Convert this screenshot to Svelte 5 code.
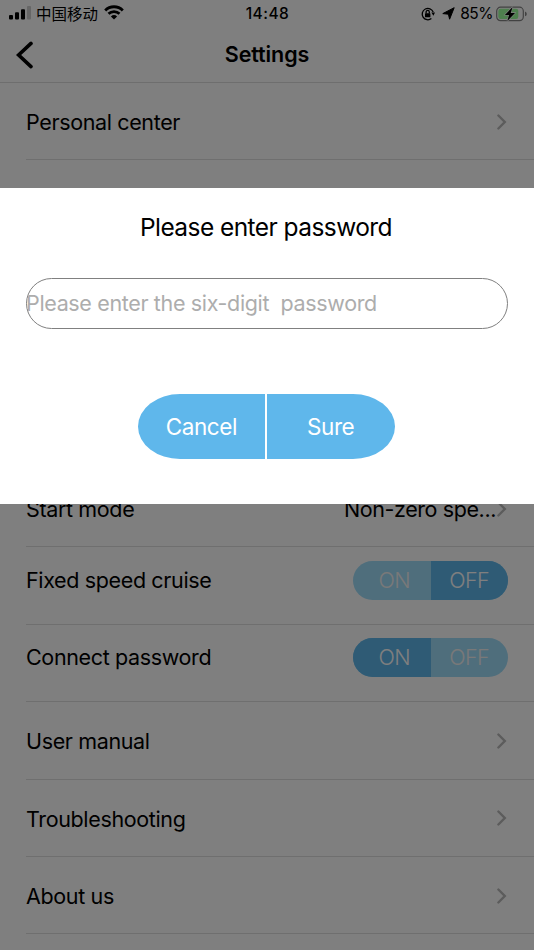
<script lang="ts">
	type Row = {
		label: string;
		value?: string;
		toggle?: 'on' | 'off';
	};

	const topRows: Row[] = [{ label: 'Personal center' }];

	const rows: Row[] = [
		{ label: 'Start mode', value: 'Non-zero spe...' },
		{ label: 'Fixed speed cruise', toggle: 'off' },
		{ label: 'Connect password', toggle: 'on' },
		{ label: 'User manual' },
		{ label: 'Troubleshooting' },
		{ label: 'About us' }
	];

	let password = $state('');
</script>

{#snippet settingRow(row: Row)}
	<li class="row" class:has-toggle={row.toggle}>
		<span class="label">{row.label}</span>
		{#if row.toggle}
			<div class="toggle">
				<span class:active={row.toggle === 'on'}>ON</span>
				<span class:active={row.toggle === 'off'}>OFF</span>
			</div>
		{:else}
			{#if row.value}
				<span class="value">{row.value}</span>
			{/if}
			<svg class="chevron" viewBox="0 0 11 18" width="11" height="18">
				<path d="M1.4 2.5 L7.8 9 L1.4 15.5" />
			</svg>
		{/if}
	</li>
{/snippet}

<main class="screen">
	<header class="status">
		<div class="carrier">
			<svg class="signal" viewBox="0 0 22 14" width="22" height="14">
				<rect x="0" y="9" width="4" height="4.6" rx="1" />
				<rect x="6" y="6.3" width="4" height="7.3" rx="1" />
				<rect x="12" y="3.2" width="4" height="10.4" rx="1" />
				<rect class="faint" x="18" y="0" width="4" height="13.6" rx="1" />
			</svg>
			<span class="network">中国移动</span>
			<svg class="wifi" viewBox="0 0 20 15" width="20" height="15">
				<path d="M1.2 5.4 C6 .5 14 .5 18.8 5.4" />
				<path d="M4.5 8.8 C7.6 5.8 12.4 5.8 15.5 8.8" />
				<path class="dot" d="M6.9 11.4 Q10 8.8 13.1 11.4 L10 14.6 Z" />
			</svg>
		</div>
		<span class="time">14:48</span>
		<div class="power">
			<svg class="lock" viewBox="0 0 14 14" width="14" height="14">
				<path d="M10.4 11.6 A5.7 5.7 0 1 1 12.2 5" />
				<path class="solid" d="M10.4 5.6 H14 L12.4 8.7 Z" />
				<rect class="solid" x="4" y="6.2" width="5.4" height="4" rx=".5" />
				<path d="M5.1 6.4 V5 A1.6 1.6 0 0 1 8.3 5 V6.4" />
			</svg>
			<svg class="arrow" viewBox="0 0 13 13" width="13" height="13">
				<path d="M12.2 .7 L7.6 12.2 L6.4 7.2 L.8 6.6 Z" />
			</svg>
			<span class="percent">85%</span>
			<svg class="battery" viewBox="0 0 31 16" width="31" height="16">
				<rect class="shell" x=".7" y="1.2" width="26.6" height="13.4" rx="3.8" />
				<rect class="charge" x="2.3" y="2.8" width="20" height="10.2" rx="2.2" />
				<path class="tip" d="M29 5.6 Q30.8 6.2 30.8 7.9 Q30.8 9.6 29 10.2 Z" />
				<path class="bolt" d="M16.6 .9 L8.9 9 H13.1 L11.3 15 L19 6.9 H14.7 Z" />
			</svg>
		</div>
	</header>

	<nav class="navbar">
		<svg class="back" viewBox="0 0 18 28" width="18" height="28">
			<path d="M15 2.4 L2.6 14 L15 25.6" />
		</svg>
		<h1>Settings</h1>
	</nav>

	<ul class="list">
		{#each topRows as row}
			{@render settingRow(row)}
		{/each}
	</ul>
	<ul class="list lower">
		{#each rows as row}
			{@render settingRow(row)}
		{/each}
	</ul>
</main>

<div class="backdrop">
	<div class="dialog" role="dialog" aria-labelledby="dialog-title">
		<h2 id="dialog-title">Please enter password</h2>
		<input type="text" placeholder="Please enter the six-digit  password" bind:value={password} />
		<div class="actions">
			<button>Cancel</button>
			<button>Sure</button>
		</div>
	</div>
</div>

<style>
	:global(body) {
		background: #fff;
		overflow: hidden;
	}

	.screen,
	.backdrop {
		width: 534px;
		height: 950px;
		overflow: hidden;
		box-sizing: border-box;
		font-family: Inter, 'Noto Sans CJK SC', sans-serif;
		color: #000;
	}

	svg {
		display: block;
		flex: none;
	}

	.status {
		display: grid;
		grid-template-columns: 1fr auto 1fr;
		align-items: center;
		height: 27px;
		padding: 0 7px 0 9px;
	}

	.carrier,
	.power {
		display: flex;
		align-items: center;
	}

	.power {
		justify-content: flex-end;
	}

	.signal {
		margin-top: -1px;
	}

	.faint {
		opacity: 0.2;
	}

	.network {
		margin: 0 6px 0 5px;
		font-family: 'Noto Sans CJK SC', sans-serif;
		font-size: 15.5px;
		line-height: 27px;
	}

	.wifi {
		margin-top: -2px;
	}

	.wifi path {
		fill: none;
		stroke: #000;
		stroke-width: 2.8;
	}

	.wifi .dot {
		fill: #000;
		stroke: none;
	}

	.time {
		margin-right: 1px;
		font-size: 15.5px;
		font-weight: 500;
		letter-spacing: 0.5px;
	}

	.lock {
		margin-right: 7px;
	}

	.lock path {
		fill: none;
		stroke: #000;
		stroke-width: 1.3;
	}

	.lock .solid {
		fill: #000;
		stroke: none;
	}

	.arrow {
		margin-right: 5px;
	}

	.arrow path {
		stroke: #000;
		stroke-width: 1;
		stroke-linejoin: round;
	}

	.percent {
		margin-right: 3px;
		font-size: 15.5px;
		letter-spacing: -0.5px;
	}

	.shell {
		fill: none;
		stroke: #848484;
		stroke-width: 1.2;
	}

	.charge {
		fill: #9cff9c;
	}

	.tip {
		fill: #848484;
	}

	.bolt {
		stroke: #fff;
		stroke-width: 1.2;
		paint-order: stroke;
	}

	.navbar {
		display: grid;
		grid-template-columns: 18px 1fr 18px;
		align-items: center;
		height: 55px;
		padding: 0 16px;
		border-bottom: 1px solid #dcdcdc;
	}

	.back path {
		fill: none;
		stroke: #000;
		stroke-width: 3.6;
		stroke-linecap: round;
	}

	h1 {
		margin: 0 0 2px;
		font-size: 21.5px;
		font-weight: 600;
		letter-spacing: -0.1px;
		text-align: center;
	}

	.list {
		margin: 0;
		padding: 0 0 0 26px;
		list-style: none;
	}

	/* leaves room for the rows covered by the dialog */
	.lower {
		margin-top: 309.6px;
	}

	.row {
		display: flex;
		align-items: center;
		box-sizing: border-box;
		height: 77.4px;
		padding-top: 2px;
		padding-right: 26px;
		border-bottom: 1px solid #dedede;
		font-size: 21.5px;
		letter-spacing: -0.36px;
	}

	.has-toggle {
		padding-bottom: 13px;
	}

	.label {
		flex: 1;
	}

	.chevron {
		margin-top: -1px;
	}

	.value {
		margin-right: 1px;
		letter-spacing: -0.4px;
	}

	.chevron path {
		fill: none;
		stroke: #b8b8b8;
		stroke-width: 2.4;
		stroke-linecap: round;
	}

	.toggle {
		display: flex;
		width: 155px;
		height: 39px;
		border-radius: 20px;
		overflow: hidden;
		background: #9fdcf8;
	}

	.toggle span {
		width: 50%;
		box-sizing: border-box;
		line-height: 39px;
		text-align: center;
		font-weight: 300;
		letter-spacing: -0.6px;
		color: #f2f2f2;
	}

	.toggle span:first-child {
		padding-left: 5px;
	}

	.toggle .active {
		background: #5eb6ea;
		color: #fff;
	}

	.backdrop {
		position: absolute;
		inset: 0;
		padding-top: 188px;
		background: rgba(0, 0, 0, 0.5);
	}

	.dialog {
		display: flex;
		flex-direction: column;
		align-items: center;
		box-sizing: border-box;
		height: 316px;
		padding: 24px 26px 0;
		background: #fff;
	}

	h2 {
		margin: 0 2px 0 0;
		font-size: 24.5px;
		font-weight: 400;
		letter-spacing: -0.56px;
		line-height: 30px;
	}

	input {
		box-sizing: border-box;
		width: 100%;
		height: 51px;
		margin: 36px 0 65px;
		padding: 0 0 1px;
		border: 1px solid #808080;
		border-radius: 26px;
		outline: none;
		background: none;
		font: inherit;
		font-size: 21.5px;
		letter-spacing: -0.35px;
		text-indent: -1px;
	}

	input::placeholder {
		color: #adadad;
		opacity: 1;
	}

	.actions {
		display: flex;
		gap: 1.5px;
		width: 257px;
		height: 65px;
		margin-right: 2px;
		border-radius: 42px / 32.5px;
		overflow: hidden;
	}

	button {
		flex: 1;
		padding: 0;
		border: 0;
		background: #5fb7eb;
		color: #fff;
		font: inherit;
		font-size: 22.5px;
		letter-spacing: -0.4px;
	}
</style>
